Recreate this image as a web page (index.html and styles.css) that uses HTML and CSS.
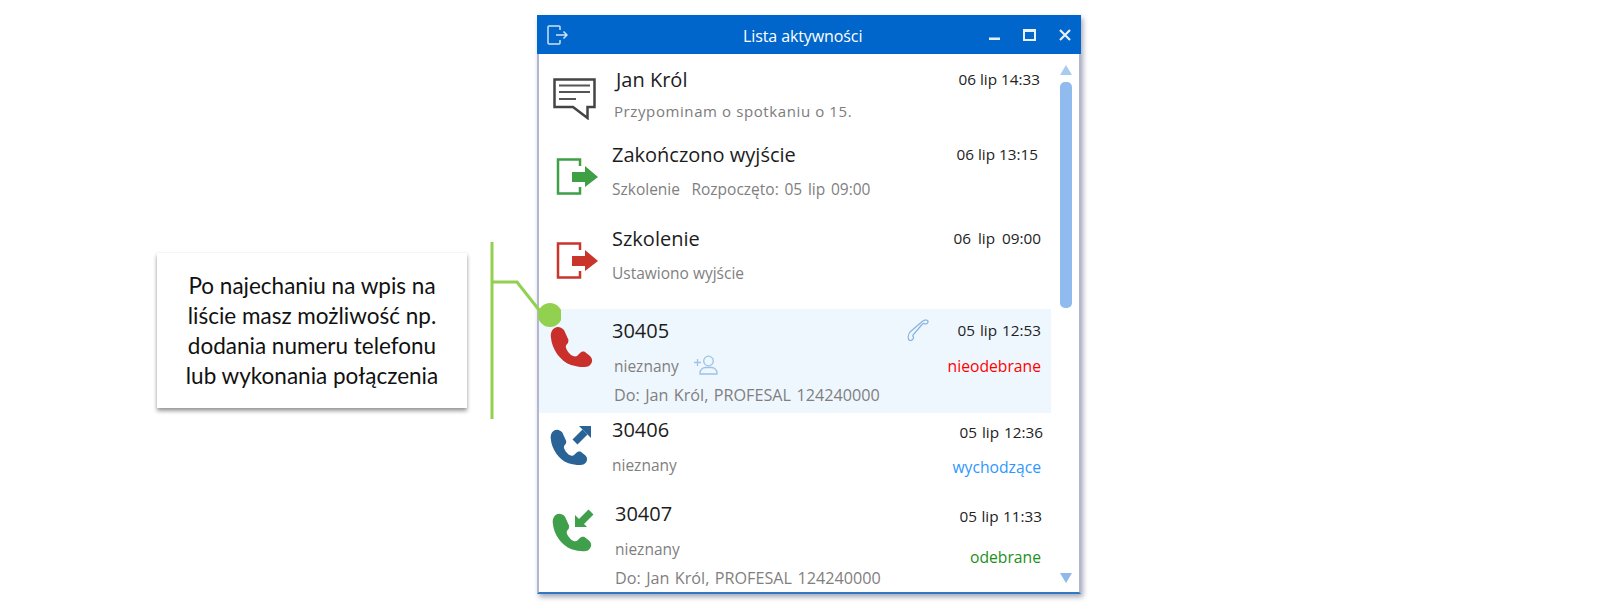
FILE: index.html
```html
<!DOCTYPE html>
<html lang="pl">
<head>
<meta charset="utf-8">
<title>Lista aktywności</title>
<link rel="stylesheet" href="styles.css">
</head>
<body>
<main class="canvas">
  <section class="window">
    <header class="titlebar">
      <svg class="exit-small" viewBox="0 0 21 20" width="21" height="20"><path d="M13 5V2a1 1 0 0 0-1-1H2a1 1 0 0 0-1 1v16a1 1 0 0 0 1 1h10a1 1 0 0 0 1-1v-3M9 10h11M16.500 6.500L20 10l-3.500 3.500"/></svg>
      <h1 class="title">Lista aktywności</h1>
      <div class="controls">
        <svg class="ctl ctl-min" viewBox="0 0 11 12" width="11" height="12"><rect x="0" y="8.500" width="11" height="2.500"/></svg>
        <svg class="ctl ctl-max" viewBox="0 0 13 12" width="13" height="12"><rect x="1" y="1.500" width="11" height="9.500" class="outline"/><rect x="0" y="0" width="13" height="3"/></svg>
        <svg class="ctl ctl-close" viewBox="0 0 12 12" width="12" height="12"><path d="M1 1l10 10M11 1L1 11" class="cross"/></svg>
      </div>
    </header>
    <div class="panel">
      <ul class="list">
        <li class="row r1">
          <svg class="ico" viewBox="0 0 43 42" width="43" height="42"><path class="msg" d="M1.500 1.500H41.500V29H34.500V40L20 29H1.500Z"/><path class="msg-lines" d="M6 7.500H37M6 14H37M6 21H23"/></svg>
          <div class="main">
            <div class="name">Jan Król</div>
            <div class="sub sub-strong">Przypominam o spotkaniu o 15.</div>
          </div>
          <div class="meta"><div class="date">06 lip 14:33</div></div>
        </li>
        <li class="row r2">
          <svg class="ico exit-green" viewBox="0 0 42 37" width="42" height="37"><path class="br" d="M24 8V1.500H2V35.500H24V29"/><path class="arr" d="M16 14H29V8L42 19 29 29V24H16Z"/></svg>
          <div class="main">
            <div class="name">Zakończono wyjście</div>
            <div class="sub spaced">Szkolenie&nbsp; Rozpoczęto: 05 lip 09:00</div>
          </div>
          <div class="meta"><div class="date">06 lip 13:15</div></div>
        </li>
        <li class="row r3">
          <svg class="ico exit-red" viewBox="0 0 42 37" width="42" height="37"><path class="br" d="M24 8V1.500H2V35.500H24V29"/><path class="arr" d="M16 14H29V8L42 19 29 29V24H16Z"/></svg>
          <div class="main">
            <div class="name">Szkolenie</div>
            <div class="sub">Ustawiono wyjście</div>
          </div>
          <div class="meta"><div class="date">06 lip 09:00</div></div>
        </li>
        <li class="row r4 hover">
          <svg class="ico phone-red" viewBox="0 0 44 44" width="44" height="44"><path class="handset" d="M8 2C3 2 0 7 1 13C2 24 10 36 21 40C28 42 35 43 39 41C43 38 43 34 40 31L35 27C33 26 31 27 30 28L27 31C25 32 23 31 21 30C19 28 17 26 16 23C15.500 21 16 20 18 18L18.500 15L14 5C12 3 10 2 8 2Z"/></svg>
          <div class="main">
            <div class="name">30405</div>
            <div class="sub with-action">nieznany
              <svg class="add-user" viewBox="0 0 24 20" width="24" height="20"><path d="M0 7.500H7M3.500 4V11"/><circle cx="14.500" cy="6" r="4.800"/><path d="M6 19v-1c0-3.500 3-5.500 5.500-5.500h6c2.500 0 5.500 2 5.500 5.500v1z"/></svg>
            </div>
            <div class="sub to">Do: Jan Król, PROFESAL 124240000</div>
          </div>
          <div class="meta">
            <div class="date has-action">
              <svg class="call" viewBox="0 0 22 22" width="22" height="22"><path d="M14 3.500C16.500 1 19.500 0.500 20.500 1.500s.5 2.500-.5 3-2.500.5-3 0-1 0-2 1L6.500 15.500c-1 1-1 1.500-.5 2s.5 2-.5 3-2.500 1.500-3.500.5-1.500-4.500 1-8z"/></svg>
              <span>05 lip 12:53</span>
            </div>
            <div class="status missed">nieodebrane</div>
          </div>
        </li>
        <li class="row r5">
          <svg class="ico phone-blue" viewBox="0 0 44 44" width="44" height="44"><path class="handset" transform="translate(0 3) scale(.88)" d="M8 2C3 2 0 7 1 13C2 24 10 36 21 40C28 42 35 43 39 41C43 38 43 34 40 31L35 27C33 26 31 27 30 28L27 31C25 32 23 31 21 30C19 28 17 26 16 23C15.500 21 16 20 18 18L18.500 15L14 5C12 3 10 2 8 2Z"/><path class="arrowline" d="M35 7L25 17"/><path class="arrowhead" d="M29 1H41V13Z"/></svg>
          <div class="main">
            <div class="name">30406</div>
            <div class="sub">nieznany</div>
          </div>
          <div class="meta">
            <div class="date">05 lip 12:36</div>
            <div class="status outgoing">wychodzące</div>
          </div>
        </li>
        <li class="row r6">
          <svg class="ico phone-green" viewBox="0 0 44 46" width="44" height="46"><path class="handset" transform="translate(0 4) scale(.93)" d="M8 2C3 2 0 7 1 13C2 24 10 36 21 40C28 42 35 43 39 41C43 38 43 34 40 31L35 27C33 26 31 27 30 28L27 31C25 32 23 31 21 30C19 28 17 26 16 23C15.500 21 16 20 18 18L18.500 15L14 5C12 3 10 2 8 2Z"/><path class="arrowline" d="M39 4L29 14"/><path class="arrowhead" d="M23 7V19H35Z"/></svg>
          <div class="main">
            <div class="name">30407</div>
            <div class="sub">nieznany</div>
            <div class="sub to">Do: Jan Król, PROFESAL 124240000</div>
          </div>
          <div class="meta">
            <div class="date">05 lip 11:33</div>
            <div class="status answered">odebrane</div>
          </div>
        </li>
      </ul>
      <div class="scrollbar">
        <span class="arrow up"></span>
        <span class="thumb"></span>
        <span class="arrow down"></span>
      </div>
    </div>
  </section>

  <aside class="callout">Po najechaniu na wpis na liście masz możliwość np. dodania numeru telefonu lub wykonania połączenia</aside>
  <svg class="connector" viewBox="0 0 80 190" width="80" height="190"><path d="M11 1V178M11 41H36L62 74"/><circle cx="69" cy="74" r="12"/></svg>
</main>
</body>
</html>
```

FILE: styles.css
```css
* { box-sizing: border-box; margin: 0; padding: 0; }
html, body { width: 100%; height: 100%; background: #fff; overflow: hidden; }
body { font-family: "Open Sans", "Noto Sans", sans-serif; color: #222; }

.canvas { position: relative; width: 1603px; height: 614px; }

/* window on the canvas */
.window {
  position: absolute;
  left: 537px;
  top: 15px;
  width: 544px;
  height: 579px;
  display: flex;
  flex-direction: column;
  box-shadow: 2px 3px 5px rgba(60, 64, 100, .45);
}
.titlebar {
  height: 39px;
  flex: none;
  display: flex;
  align-items: center;
  padding-left: 10px;
  background: #0066cc;
  color: #fff;
}
.exit-small { fill: none; stroke: #cfe2f6; stroke-width: 1.500; }
.title { margin-left: 175px; font-size: 16px; font-weight: 400; line-height: 1; position: relative; top: 1px; letter-spacing: -.1px; }
.controls { margin-left: auto; display: flex; align-items: center; gap: 23px; padding-right: 10px; }
.ctl { fill: #e8f1fb; }
.ctl .outline { fill: none; stroke: #e8f1fb; stroke-width: 2; }
.ctl .cross { fill: none; stroke: #e8f1fb; stroke-width: 2.200; }

.panel {
  flex: 1;
  min-height: 0;
  display: flex;
  background: #fff;
  border-left: 2px solid #b3b7cd;
  border-right: 2px solid #b3b7cd;
  border-bottom: 2px solid #2f78c4;
}
.list { width: 512px; flex: none; list-style: none; display: flex; flex-direction: column; overflow: hidden; }

.row { display: grid; grid-template-columns: 73px 1fr auto; align-items: start; flex: none; }
.hover { background: #eff7fe; }

.ico { display: block; margin-left: var(--ix); margin-top: var(--iy); }
.main { margin-left: var(--mx, 0); padding-top: var(--mt); }
.meta { padding-top: var(--dt); padding-right: var(--dr); text-align: right; }

.r1 { height: 76px; --ix: 14px; --iy: 24px; --mx: 4px; --mt: 12px; --dt: 13px; --dr: 11px; --ws: 0; }
.r2 { height: 82px; --ix: 17px; --iy: 28px; --mt: 11px; --dt: 12px; --dr: 13px; --ws: 0; }
.r3 { height: 97px; --ix: 17px; --iy: 30px; --mt: 13px; --dt: 14px; --dr: 10px; --ws: 3px; }
.r4 { height: 104px; --ix: 11px; --iy: 16px; --mt: 8px; --dt: 9px; --dr: 10px; --gap: 12px; --ws: 1px; }
.r5 { height: 82px; --ix: 11px; --iy: 12px; --mt: 3px; --dt: 7px; --dr: 8px; --gap: 11px; --ws: 1px; }
.r6 { height: 97px; --ix: 13px; --iy: 13px; --mx: 3px; --mt: 5px; --dt: 9px; --dr: 9px; --gap: 17px; --ws: .5px; }

.name { font-size: 20px; line-height: 28px; color: #1c1c1c; }
.sub { font-size: 15.500px; line-height: 24px; margin-top: 8px; color: #7f7f7f; }
.spaced { word-spacing: 1.700px; }
.r1 .sub { margin-top: 5px; margin-left: -2px; }
.r4 .sub { margin-top: 9px; margin-left: 2px; }
.r5 .sub, .r6 .sub { margin-top: 9px; }
.sub-strong { font-size: 15px; font-weight: 500; letter-spacing: .6px; color: #7c7c7c; }
.sub.to { margin-top: 5px; font-size: 16.200px; word-spacing: 1.200px; }

.with-action { display: flex; align-items: center; gap: 15px; }
.add-user { fill: none; stroke: #9cc2e6; stroke-width: 1.300; margin-top: -2px; }

.date { font-size: 15.300px; line-height: 24px; color: #222; word-spacing: var(--ws); }
.has-action { display: flex; justify-content: flex-end; align-items: center; gap: 28px; }
.call { fill: none; stroke: #86b3e2; stroke-width: 1.200; }

.status { font-size: 15.700px; line-height: 24px; margin-top: var(--gap); }
.missed { color: #ff0000; }
.outgoing { color: #2e97ff; }
.answered { color: #1c8f1c; }
.r5 .status { margin-right: 2px; }
.r6 .status { margin-right: 1px; }

/* icons */
.msg { fill: #fff; stroke: #444; stroke-width: 2.500; }
.msg-lines { fill: none; stroke: #555; stroke-width: 2.200; }
.br { fill: none; stroke-width: 2.500; }
.exit-green .br { stroke: #3f9f45; }
.exit-green .arr { fill: #3f9f45; }
.exit-red .br { stroke: #c9352b; }
.exit-red .arr { fill: #c9352b; }
.arrowline { fill: none; stroke-width: 7; }
.phone-red .handset { fill: #c9302c; }
.phone-blue .handset, .phone-blue .arrowhead { fill: #2a6496; }
.phone-blue .arrowline { stroke: #2a6496; }
.phone-green .handset, .phone-green .arrowhead { fill: #3f9f4a; }
.phone-green .arrowline { stroke: #3f9f4a; }

/* scrollbar */
.scrollbar { flex: 1; display: flex; flex-direction: column; align-items: center; padding: 11px 6px 9px 6px; margin-left: 2px; }
.thumb { width: 12px; height: 226px; margin-top: 7px; border-radius: 5px; background: #90bbee; }
.arrow { width: 0; height: 0; border-left: 6px solid transparent; border-right: 6px solid transparent; }
.arrow.up { border-bottom: 10px solid #a9cbf2; }
.arrow.down { margin-top: auto; border-top: 10px solid #8fb8ec; }

/* callout */
.callout {
  position: absolute;
  left: 157px;
  top: 253px;
  width: 310px;
  height: 155px;
  display: flex;
  align-items: center;
  justify-content: center;
  padding: 0 22px;
  text-align: center;
  font-family: "Lato", "Open Sans", sans-serif;
  font-size: 22.500px;
  line-height: 30px;
  color: #111;
  background: #fff;
  box-shadow: 0 3px 4px rgba(0, 0, 0, .4), 0 0 2px rgba(0, 0, 0, .08);
}
.connector { position: absolute; left: 481px; top: 241px; fill: #92d050; }
.connector path { fill: none; stroke: #92d050; stroke-width: 3; }
```
